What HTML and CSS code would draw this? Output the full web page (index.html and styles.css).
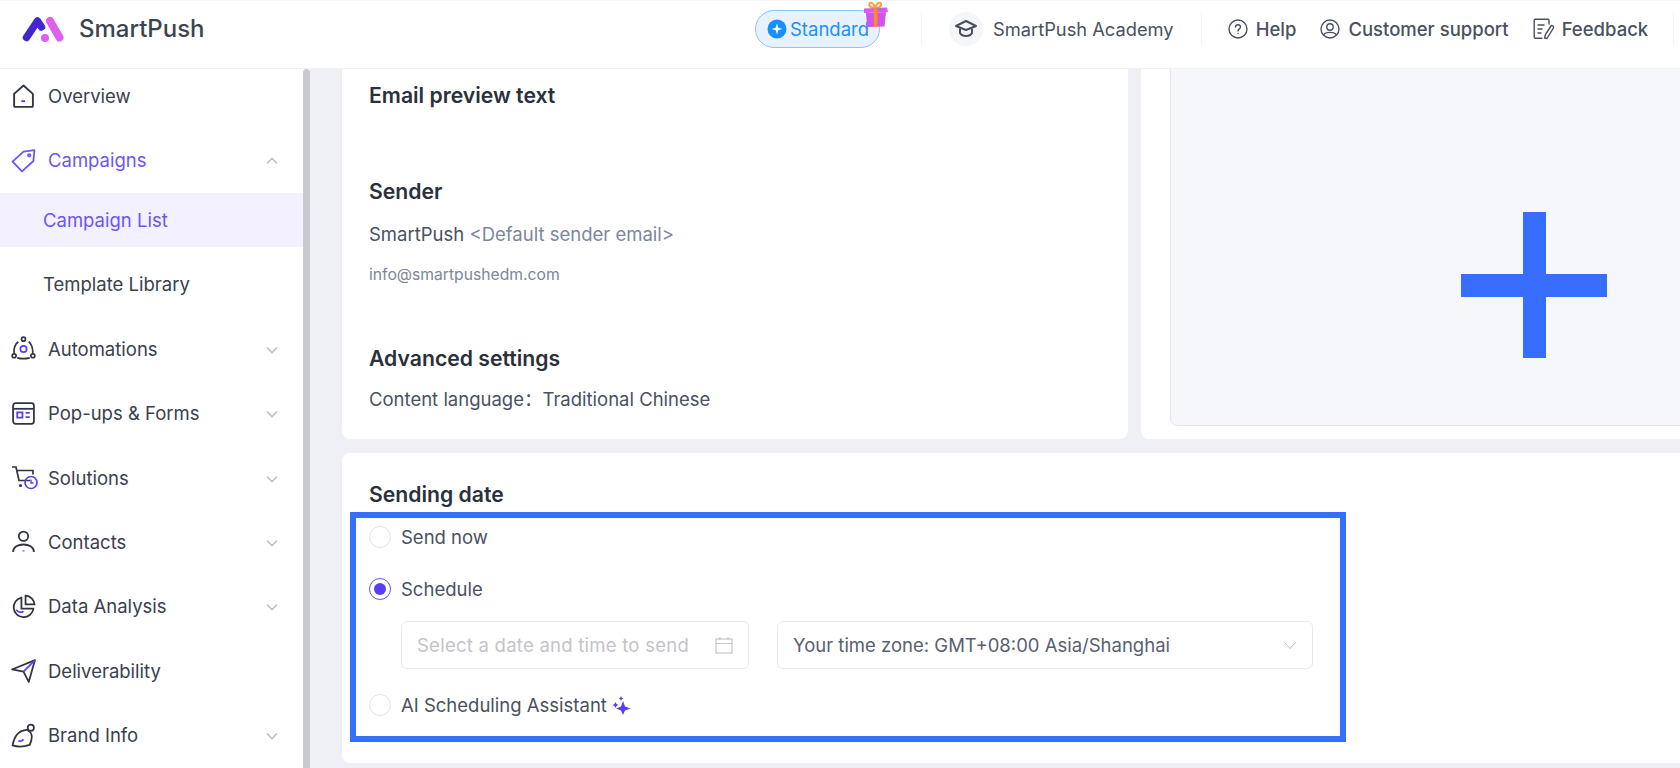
FILE: index.html
```html
<!DOCTYPE html>
<html lang="en">
<head>
<meta charset="utf-8">
<title>SmartPush</title>
<link rel="stylesheet" href="styles.css">
</head>
<body>
<header class="topbar">
  <div class="brand">
    <svg class="logo" viewBox="0 0 42 26" width="42" height="26"><path d="M4.500 21.500 15.500 5 19.500 11" fill="none" stroke="#4326cf" stroke-width="7.500" stroke-linecap="round" stroke-linejoin="round"/><path d="M28 5 37.500 21.500" fill="none" stroke="#e05ff0" stroke-width="8" stroke-linecap="round"/><circle cx="23" cy="22" r="4" fill="#e05ff0"/></svg>
    <span class="brand-name">SmartPush</span>
  </div>
  <div class="top-center">
    <div class="plan">
      <svg class="plan-icon" viewBox="0 0 20 20" width="20" height="20"><circle cx="10" cy="10" r="9.500" fill="#1890ff"/><path d="M10 4.500 11.300 8.700 15.500 10 11.300 11.300 10 15.500 8.700 11.300 4.500 10 8.700 8.700Z" fill="#fff"/></svg>
      <span>Standard</span>
      <svg class="gift" viewBox="0 0 27 27" width="27" height="27"><path d="M13 7C9 7 6.500 5 7.500 2.500 8.500.5 12 2 13 7 14 2 18 .5 19 2.500 20 5 17 7 13 7Z" fill="none" stroke="#ff9a2e" stroke-width="1.800"/><path d="M2 7.500 25 6.500 26 11 2 12Z" fill="#d65cf0"/><path d="M4 12 24 11 22.500 25.500 5 26Z" fill="#cf55ee"/><path d="M11.500 7.300H15.500V25.600H12Z" fill="#ff8a1f"/></svg>
    </div>
    <i class="vline"></i>
    <div class="academy">
      <span class="academy-badge"><svg viewBox="0 0 24 24" width="24" height="24" fill="none" stroke="#4a4f5c" stroke-width="2" stroke-linejoin="round"><path d="M12 4 22 9 12 13 2 9Z"/><path d="M6 11.500V16C8 20 16 20 18 16V11.500"/></svg></span>
      <span>SmartPush Academy</span>
    </div>
    <i class="vline vline-b"></i>
  </div>
  <nav class="top-links">
    <a class="top-link"><svg viewBox="0 0 20 20" width="20" height="20" fill="none" stroke="#4a5160" stroke-width="1.400" stroke-linecap="round"><circle cx="10" cy="10" r="9"/><path d="M7.500 8C7.500 5 12.500 5 12.500 8 12.500 10 10 9.800 10 12"/><path d="M10 14.500V14.600"/></svg>Help</a>
    <a class="top-link"><svg viewBox="0 0 20 20" width="20" height="20" fill="none" stroke="#4a5160" stroke-width="1.400"><circle cx="10" cy="10" r="9"/><circle cx="10" cy="8" r="3.200"/><path d="M3.800 16C5 12.500 15 12.500 16.200 16"/></svg>Customer support</a>
    <a class="top-link top-link-tight"><svg viewBox="0 0 22 22" width="22" height="22" fill="none" stroke="#4a5160" stroke-width="1.400" stroke-linecap="round" stroke-linejoin="round"><path d="M16 6V2.500C16 1.800 15.500 1.200 14.800 1.200H2.500C1.800 1.200 1.200 1.800 1.200 2.500V19C1.200 19.700 1.800 20.300 2.500 20.300H9"/><path d="M5 7H11M5 11H9M5 15H8"/><path d="M14 20.500 11.500 20 12.500 16.500 18 8C19 7 21 8.200 20.500 9.800Z"/></svg>Feedback</a>
    <i class="vline vline-c"></i>
  </nav>
</header>
<div class="shell">
  <aside class="sidebar">
    <div class="nav-item"><svg class="nav-icon" viewBox="0 0 24 24" fill="none" stroke="#2f3441" stroke-width="1.800" stroke-linejoin="round"><path d="M3 9.500 12 1.500 21 9.500V21C21 21.500 20.500 22 20 22H4C3.500 22 3 21.500 3 21Z"/><path d="M10 16.500H13.500" stroke="#5b3df5"/></svg><span>Overview</span></div>
    <div class="nav-item nav-active"><svg class="nav-icon" viewBox="0 0 24 24" fill="none" stroke="#6c54f6" stroke-width="1.700" stroke-linejoin="round"><path d="M1.500 13 12 3.500 22.500 2 21.500 12.500 10.500 22.500Z"/><circle cx="17.500" cy="7" r="1.200"/></svg><span>Campaigns</span><svg class="chev" viewBox="0 0 12 8"><path d="M1 6.500 6 1.500 11 6.500"/></svg></div>
    <div class="sub-item sub-active">Campaign List</div>
    <div class="sub-item">Template Library</div>
    <div class="nav-item"><svg class="nav-icon" viewBox="0 0 24 24" fill="none" stroke="#2f3441" stroke-width="1.600"><circle cx="12" cy="3" r="1.900"/><circle cx="3" cy="19" r="1.900"/><circle cx="21" cy="19" r="1.900"/><path d="M7 5.500C3.500 8 2.500 12 3 17M17 5.500C20 8 21 12 21 17M6 21C9.500 22 14 22 18 21"/><circle cx="12" cy="12.500" r="3" stroke="#5b3df5"/></svg><span>Automations</span><svg class="chev" viewBox="0 0 12 8"><path d="M1 1.500 6 6.500 11 1.500"/></svg></div>
    <div class="nav-item"><svg class="nav-icon" viewBox="0 0 24 24" fill="none" stroke="#2f3441" stroke-width="1.700"><rect x="2" y="2" width="20" height="20" rx="2.500"/><path d="M2 7.500H22"/><path d="M6 11H11V16H6Z" stroke="#5b3df5"/><path d="M14 11.500H18M14 15.500H18" stroke="#5b3df5"/></svg><span>Pop-ups &amp; Forms</span><svg class="chev" viewBox="0 0 12 8"><path d="M1 1.500 6 6.500 11 1.500"/></svg></div>
    <div class="nav-item"><svg class="nav-icon nav-icon-wide" viewBox="0 0 27 24" fill="none" stroke="#2f3441" stroke-width="1.700"><path d="M1 1.500H5L8 15H19"/><path d="M6 5H22V9"/><circle cx="9.500" cy="20" r="1.500" fill="#2f3441" stroke="none"/><circle cx="20" cy="17" r="6" stroke="#5b3df5"/><path d="M20 14V17.500H22.500" stroke="#5b3df5" stroke-width="1.400"/></svg><span>Solutions</span><svg class="chev" viewBox="0 0 12 8"><path d="M1 1.500 6 6.500 11 1.500"/></svg></div>
    <div class="nav-item"><svg class="nav-icon" viewBox="0 0 24 24" fill="none" stroke="#2f3441" stroke-width="1.700"><circle cx="12" cy="7" r="4.500"/><path d="M2 22C2 12.500 22 12.500 22 22"/><path d="M12 20.500V21.500" stroke="#5b3df5" stroke-width="2"/></svg><span>Contacts</span><svg class="chev" viewBox="0 0 12 8"><path d="M1 1.500 6 6.500 11 1.500"/></svg></div>
    <div class="nav-item"><svg class="nav-icon" viewBox="0 0 24 24" fill="none" stroke="#2f3441" stroke-width="1.700"><path d="M10 3.500A9.500 9.500 0 1 0 21.500 14H10Z"/><path d="M14 1.500A9 9 0 0 1 22.500 10H14Z"/><path d="M5 15C7 18 10 18 12 16.500" stroke="#5b3df5"/></svg><span>Data Analysis</span><svg class="chev" viewBox="0 0 12 8"><path d="M1 1.500 6 6.500 11 1.500"/></svg></div>
    <div class="nav-item"><svg class="nav-icon" viewBox="0 0 24 24" fill="none" stroke="#2f3441" stroke-width="1.700" stroke-linejoin="round"><path d="M1 11 23 2 17 23 12 13Z"/><path d="M12 13 23 2" stroke="#5b3df5"/></svg><span>Deliverability</span></div>
    <div class="nav-item"><svg class="nav-icon" viewBox="0 0 24 24" fill="none" stroke="#2f3441" stroke-width="1.700" stroke-linejoin="round"><path d="M1.500 21.500C3 13 7 7 15 6.500 21 9 21 14 18 21 12 23 6 23 1.500 21.500Z"/><circle cx="19" cy="4.500" r="3"/><path d="M7 17C9.500 18 11 17 12 15.500" stroke="#5b3df5"/></svg><span>Brand Info</span><svg class="chev" viewBox="0 0 12 8"><path d="M1 1.500 6 6.500 11 1.500"/></svg></div>
  </aside>
  <div class="scrollbar"></div>
  <main class="content">
    <div class="top-row">
      <section class="card card-info">
        <h2 class="title">Email preview text</h2>
        <h2 class="title title-sender">Sender</h2>
        <p class="sender-line">SmartPush <span class="muted">&lt;Default sender email&gt;</span></p>
        <p class="sender-mail">info@smartpushedm.com</p>
        <h2 class="title title-adv">Advanced settings</h2>
        <p class="lang-line">Content language：Traditional Chinese</p>
      </section>
      <section class="card card-preview">
        <div class="preview">
          <svg class="plus" viewBox="0 0 146 146" width="146" height="146"><path d="M62 0H85V62H146V85H85V146H62V85H0V62H62Z" fill="#376eff"/></svg>
        </div>
      </section>
    </div>
    <section class="card card-date">
      <h2 class="title">Sending date</h2>
      <div class="date-box">
        <label class="radio-row"><i class="radio"></i>Send now</label>
        <label class="radio-row row-schedule"><i class="radio radio-on"></i>Schedule</label>
        <div class="fields">
          <div class="field field-date"><span>Select a date and time to send</span><svg viewBox="0 0 18 18" width="18" height="18" fill="none" stroke="#c4c6cc" stroke-width="1.200"><rect x="1" y="3" width="16" height="14"/><path d="M1 7.500H17M5 1V4M13 1V4"/></svg></div>
          <div class="field field-zone"><span>Your time zone: GMT+08:00 Asia/Shanghai</span><svg viewBox="0 0 14 8" width="14" height="8" fill="none" stroke="#b9bcc4" stroke-width="1"><path d="M1 1 7 7.500 13 1"/></svg></div>
        </div>
        <label class="radio-row row-ai"><i class="radio"></i>AI Scheduling Assistant<svg class="spark" viewBox="0 0 19 19" width="19" height="19" fill="#5b3df5"><path d="M11 5 13 10.500 18.500 12.500 13 14.500 11 19 9 14.500 4 12.500 9 10.500Z"/><path d="M3.500 6 4.500 8 6.500 9 4.500 10 3.500 12 2.500 10 .5 9 2.500 8Z"/><path d="M9 0 9.800 1.700 11.500 2.500 9.800 3.300 9 5 8.200 3.300 6.500 2.500 8.200 1.700Z"/></svg></label>
      </div>
    </section>
  </main>
</div>
</body>
</html>
```

FILE: styles.css
```css
* { box-sizing: border-box; }
html, body { margin: 0; height: 768px; overflow: hidden; }
body { font-family: Inter, "Noto Sans CJK SC", "Noto Sans", sans-serif; background: #fff; color: #2f3441; }
h2, p { margin: 0; }

.topbar { height: 69px; display: flex; align-items: center; padding-bottom: 12px; background: #fff; border-top: 1px solid #f7f7f9; border-bottom: 1px solid #f1f2f6; }
.brand { width: 755px; flex: none; display: flex; align-items: center; padding-left: 22px; gap: 15px; }
.logo { flex: none; }
.brand-name { font-size: 24px; font-weight: 500; color: #3d4450; }
.top-center { display: flex; align-items: center; flex: none; }
.plan { position: relative; display: flex; align-items: center; gap: 3px; width: 125px; height: 38px; padding-left: 11px; border: 1px solid #8cc4fb; border-radius: 19px; background: #e8f2ff; color: #1890ff; font-size: 18.500px; }
.plan-icon { flex: none; }
.gift { position: absolute; left: 106px; top: -10px; }
.vline { display: block; flex: none; width: 1px; height: 32px; background: #f1f2f6; margin-left: 41px; }
.academy { display: flex; align-items: center; gap: 10px; margin-left: 27px; font-size: 18.300px; color: #4a5160; white-space: nowrap; }
.academy-badge { width: 34px; height: 34px; border-radius: 50%; background: #f5f6fa; display: flex; align-items: center; justify-content: center; }
.vline-b { margin-left: 27px; }
.top-links { display: flex; align-items: center; margin-left: 26px; flex: none; }
.top-link { display: flex; align-items: center; gap: 8px; font-size: 18.500px; font-weight: 500; color: #4a5160; margin-right: 24px; white-space: nowrap; }
.top-link-tight { gap: 7px; margin-right: 25px; }
.vline-c { margin-left: 0; }

.shell { height: 699px; display: flex; }
.sidebar { width: 303px; flex: none; background: #fff; overflow: hidden; }
.nav-item { height: 54px; margin-bottom: 10.400px; display: flex; align-items: center; padding-left: 11px; font-size: 18.500px; color: #3a404d; position: relative; }
.nav-item > span { margin-left: 12px; }
.nav-icon { width: 25px; height: 25px; flex: none; }
.nav-icon-wide { width: 27px; margin-right: -2px; }
.nav-active { color: #6c54f6; margin-bottom: 5.600px; }
.chev { position: absolute; left: 266px; top: 24px; width: 12px; height: 8px; fill: none; stroke: #bcc0cb; stroke-width: 1.600; }
.sub-item { height: 54px; margin-bottom: 10.400px; display: flex; align-items: center; padding-left: 43px; font-size: 18.500px; color: #3a404d; }
.sub-active { background: #f3f0ff; color: #6c54f6; }

.scrollbar { width: 7px; flex: none; background: #c9cacd; border-radius: 4px 4px 0 0; }
.content { flex: 1; min-width: 0; background: #eff0f5; padding-left: 32px; overflow: hidden; }
.top-row { display: flex; gap: 13px; height: 370px; }
.card { background: #fff; }
.card-info { width: 786px; flex: none; padding: 12px 0 0 27px; border-radius: 0 0 8px 8px; }
.title { font-size: 21.200px; line-height: 28px; font-weight: 600; color: #2b303b; }
.title-sender { margin-top: 68px; }
.sender-line { margin-top: 17px; font-size: 18.500px; line-height: 24px; color: #4a5160; }
.muted { color: #7d869c; }
.sender-mail { margin-top: 19px; font-size: 15.700px; line-height: 20px; color: #7d869c; }
.title-adv { margin-top: 59px; }
.lang-line { margin-top: 15px; font-size: 18.500px; line-height: 24px; color: #4a5160; }
.card-preview { width: 800px; flex: none; padding-left: 29px; border-radius: 0 0 0 8px; }
.preview { width: 728px; height: 357px; background: #f6f7fb; border: 1px solid #e3e4ee; border-top: 0; border-radius: 0 0 0 8px; display: flex; align-items: center; justify-content: center; }
.plus { flex: none; margin-top: 76px; }

.card-date { width: 1400px; height: 310px; margin-top: 14px; padding: 27px 0 0 27px; border-radius: 8px 0 0 8px; }
.date-box { width: 996px; height: 230px; margin: 4px 0 0 -19px; border: 6px solid #376eff; padding: 7px 0 0 13px; }
.radio-row { display: flex; align-items: center; height: 24px; font-size: 18.500px; color: #4a5160; }
.radio { display: block; flex: none; width: 22px; height: 22px; margin-right: 10px; border: 1px solid #e3e4e8; border-radius: 50%; background: #fff; }
.radio-on { border-color: #6c54f6; display: flex; align-items: center; justify-content: center; }
.radio-on::after { content: ""; width: 12px; height: 12px; border-radius: 50%; background: #5b3df5; }
.row-schedule { margin-top: 28px; }
.fields { display: flex; gap: 28px; margin: 20px 0 0 32px; }
.field { flex: none; height: 48px; border: 1px solid #e8e9ec; border-radius: 6px; display: flex; align-items: center; justify-content: space-between; font-size: 18.500px; padding: 0 15px; white-space: nowrap; }
.field-date { width: 348px; color: #c2c4c9; letter-spacing: .25px; }
.field-zone { width: 536px; color: #5a6070; }
.row-ai { margin-top: 24px; }
.spark { margin-left: 5px; }
```
